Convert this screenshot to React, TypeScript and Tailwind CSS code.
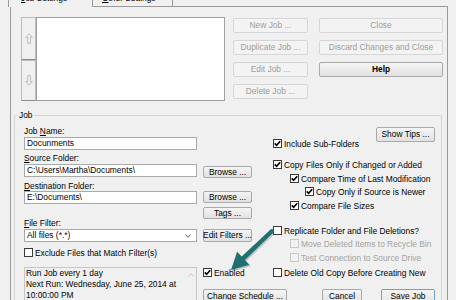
import clsx from "clsx";
import type { ReactNode } from "react";

function Btn({
    children,
    className = "",
    disabled = false,
    bold = false,
    primary = false,
}: {
    children: ReactNode;
    className?: string;
    disabled?: boolean;
    bold?: boolean;
    primary?: boolean;
}) {
    return (
        <div
            className={clsx(
                "flex items-center justify-center shrink-0 rounded-[2px] border whitespace-nowrap leading-none",
                disabled && "border-[#d6d6d6] bg-[#f3f3f3] text-[#9d9d9d]",
                !disabled && primary && "border-[#6aa3dc] bg-linear-to-b from-[#f5f5f5] to-[#e6e6e6] text-black",
                !disabled && !primary && "border-[#a9a9a9] bg-linear-to-b from-[#f5f5f5] to-[#e1e1e1] text-black",
                bold && "font-bold",
                className
            )}
        >
            {children}
        </div>
    );
}

function Check({
    label,
    checked = false,
    disabled = false,
    className = "",
}: {
    label: string;
    checked?: boolean;
    disabled?: boolean;
    className?: string;
}) {
    return (
        <div className={clsx("flex items-center h-[9px] whitespace-nowrap", className)}>
            <div
                className={clsx(
                    "w-[9px] h-[9px] shrink-0 border flex items-center justify-center",
                    disabled ? "border-[#c8c8c8] bg-[#f2f2f2]" : "border-[#3a3a3a] bg-white"
                )}
            >
                {checked && (
                    <svg width="7" height="7" viewBox="0 0 7 7">
                        <path d="M0.8 3.4 L2.6 5.3 L6.2 1.2" fill="none" stroke="#000" strokeWidth="1.6" />
                    </svg>
                )}
            </div>
            <span className={clsx("ml-[2px] leading-[10px]", disabled ? "text-[#a3a3a3]" : "text-black")}>{label}</span>
        </div>
    );
}

function Field({ value, className = "" }: { value: string; className?: string }) {
    return (
        <div className={clsx("h-[13px] border border-[#a9a9a9] bg-white flex items-center px-[2px] whitespace-nowrap", className)}>
            {value}
        </div>
    );
}

function Label({ pre = "", u, rest }: { pre?: string; u: string; rest: string }) {
    return (
        <div className="h-[10px] leading-[10px] whitespace-nowrap">
            {pre}
            <span className="underline">{u}</span>
            {rest}
        </div>
    );
}

function ArrowGlyph({ down = false }: { down?: boolean }) {
    return (
        <svg width="8" height="11" viewBox="0 0 8 11" className={down ? "rotate-180" : ""}>
            <path d="M4 0.7 L7.4 4.4 L5.4 4.4 L5.4 10.4 L2.6 10.4 L2.6 4.4 L0.6 4.4 Z" fill="none" stroke="#b8b8b8" strokeWidth="0.9" />
        </svg>
    );
}

const ARROW = "270.6,229.6 241.7,256.6 237.1,251.8 231,270 249.5,264.8 244.9,260 273.4,232.4";

export default function App() {
    return (
        <div className="relative w-[456px] h-[300px] overflow-hidden bg-[#f0f0f0] text-black font-['Liberation_Sans',Arial,sans-serif] text-[8.4px]">
            {/* tabs */}
            <div className="relative z-10 flex items-start h-[18px] -mt-[12px] ml-[8px]">
                <div className="w-[85px] h-[19px] border border-b-0 border-[#9a9a9a] bg-[#f0f0f0] pl-[12px] pt-[4px] leading-[10px] whitespace-nowrap">
                    <span className="underline">J</span>ob Settings
                </div>
                <div className="w-[80px] h-[16px] mt-[2px] border-t border-r border-[#9a9a9a] pl-[9px] pt-[2px] leading-[10px] whitespace-nowrap">
                    <span className="underline">O</span>ther Settings
                </div>
            </div>

            <div className="ml-[10px] w-[438px] h-[320px] border-l border-r border-t border-[#9a9a9a] pt-[10px] pl-[3px]">
                {/* job list */}
                <div className="flex h-[84px] ml-[7px]">
                    <div className="w-[15px] flex flex-col">
                        <div className="h-[43px] border border-[#bcbcbc] border-b-[#8c8c8c] bg-[#f0f0f0] flex items-center justify-center">
                            <ArrowGlyph />
                        </div>
                        <div className="h-[41px] border border-[#bcbcbc] border-b-[#8c8c8c] bg-[#f0f0f0] flex items-center justify-center">
                            <ArrowGlyph down />
                        </div>
                    </div>
                    <div className="w-[189px] border border-[#a0a0a0] bg-white" />
                    <div className="ml-[8px] mt-px grid grid-cols-[75px_124px] auto-rows-[15px] gap-x-[11px] gap-y-[7px]">
                        <Btn disabled>New Job ...</Btn>
                        <Btn disabled>Close</Btn>
                        <Btn disabled>Duplicate Job ...</Btn>
                        <Btn disabled>Discard Changes and Close</Btn>
                        <Btn disabled>Edit Job ...</Btn>
                        <Btn bold className="border-[#9a9a9a]">Help</Btn>
                        <Btn disabled>Delete Job ...</Btn>
                    </div>
                </div>

                {/* Job group */}
                <div className="relative mt-[14px] w-[428px] h-[200px] border border-[#d5d5d5] rounded-[2px]">
                    <div className="absolute top-[-6px] left-[3px] px-[1px] bg-[#f0f0f0] leading-[10px]">Job</div>

                    <div className="flex pt-[10px] pl-[9px]">
                        {/* left column */}
                        <div className="w-[173px] flex flex-col">
                            <Label pre="Job " u="N" rest="ame:" />
                            <Field value="Docunments" className="mt-[1px]" />
                            <div className="mt-[3px]">
                                <Label u="S" rest="ource Folder:" />
                            </div>
                            <Field value="C:\Users\Martha\Documents\" className="mt-[1px]" />
                            <div className="mt-[4px]">
                                <Label u="D" rest="estination Folder:" />
                            </div>
                            <Field value="E:\Documents\" />
                            <div className="mt-[14px]">
                                <Label u="F" rest="ile Filter:" />
                            </div>
                            <div className="mt-[1px] h-[13px] border border-[#a9a9a9] bg-white flex items-center justify-between px-[2px]">
                                <span>All files (*.*)</span>
                                <svg width="6" height="4" viewBox="0 0 6 4" className="mr-[3px]">
                                    <path d="M0.5 0.8 L3 3.2 L5.5 0.8" fill="none" stroke="#555" strokeWidth="1" />
                                </svg>
                            </div>
                            <Check label="Exclude Files that Match Filter(s)" className="mt-[6px]" />
                            <div className="mt-[10px] h-[40px] border border-[#c6c6c6] bg-[#f0f0f0] flex">
                                <div className="flex-1 px-[1px] leading-[11px] whitespace-nowrap">
                                    Run Job every 1 day
                                    <br />
                                    Next Run: Wednesday, June 25, 2014 at
                                    <br />
                                    10:00:00 PM
                                </div>
                                <div className="w-[11px] flex flex-col items-center justify-between pt-[5px] pb-[2px]">
                                    <svg width="6" height="4" viewBox="0 0 6 4">
                                        <path d="M0.5 3.2 L3 0.8 L5.5 3.2" fill="none" stroke="#c2c2c2" strokeWidth="1" />
                                    </svg>
                                    <svg width="6" height="4" viewBox="0 0 6 4">
                                        <path d="M0.5 0.8 L3 3.2 L5.5 0.8" fill="none" stroke="#c2c2c2" strokeWidth="1" />
                                    </svg>
                                </div>
                            </div>
                        </div>

                        {/* buttons column */}
                        <div className="ml-[6px] w-[49px] flex flex-col">
                            <Btn className="mt-[40px] h-[12px]">Browse ...</Btn>
                            <Btn className="mt-[13px] h-[12px]">Browse ...</Btn>
                            <Btn className="mt-[4px] h-[12px]">Tags ...</Btn>
                            <Btn className="mt-[10px] h-[13px]">Edit Filters ...</Btn>
                            <Check label="Enabled" checked className="mt-[26px]" />
                            <Btn className="mt-[12px] h-[15px] w-[84px]">Change Schedule ...</Btn>
                        </div>

                        {/* options column */}
                        <div className="ml-[21px] w-[162px] flex flex-col">
                            <Btn className="self-end mt-[1px] w-[59px] h-[15px]">Show Tips ...</Btn>
                            <Check label="Include Sub-Folders" checked className="-mt-[3px]" />
                            <Check label="Copy Files Only if Changed or Added" checked className="mt-[12px]" />
                            <Check label="Compare Time of Last Modification" checked className="mt-[5px] ml-[17px]" />
                            <Check label="Copy Only if Source is Newer" checked className="mt-[4px] ml-[32px]" />
                            <Check label="Compare File Sizes" checked className="mt-[5px] ml-[17px]" />
                            <Check label="Replicate Folder and File Deletions?" className="mt-[16px]" />
                            <Check label="Move Deleted Items to Recycle Bin" disabled className="mt-[4px] ml-[17px]" />
                            <Check label="Test Connection to Source Drive" disabled className="mt-[5px] ml-[17px]" />
                            <Check label="Delete Old Copy Before Creating New" className="mt-[6px]" />
                            <div className="mt-[12px] flex justify-end gap-[19px]">
                                <Btn className="w-[40px] h-[15px]">Cancel</Btn>
                                <Btn primary className="w-[54px] h-[15px]">Save Job</Btn>
                            </div>
                        </div>
                    </div>
                </div>
            </div>

            {/* annotation arrow */}
            <svg className="absolute left-0 top-0 pointer-events-none" width="456" height="300" viewBox="0 0 456 300">
                <polygon points={ARROW} fill="#000" opacity="0.18" transform="translate(1.2,1.4)" />
                <polygon points={ARROW} fill="#21706f" />
                <circle cx="272" cy="231" r="2.1" fill="#21706f" />
            </svg>
        </div>
    );
}
